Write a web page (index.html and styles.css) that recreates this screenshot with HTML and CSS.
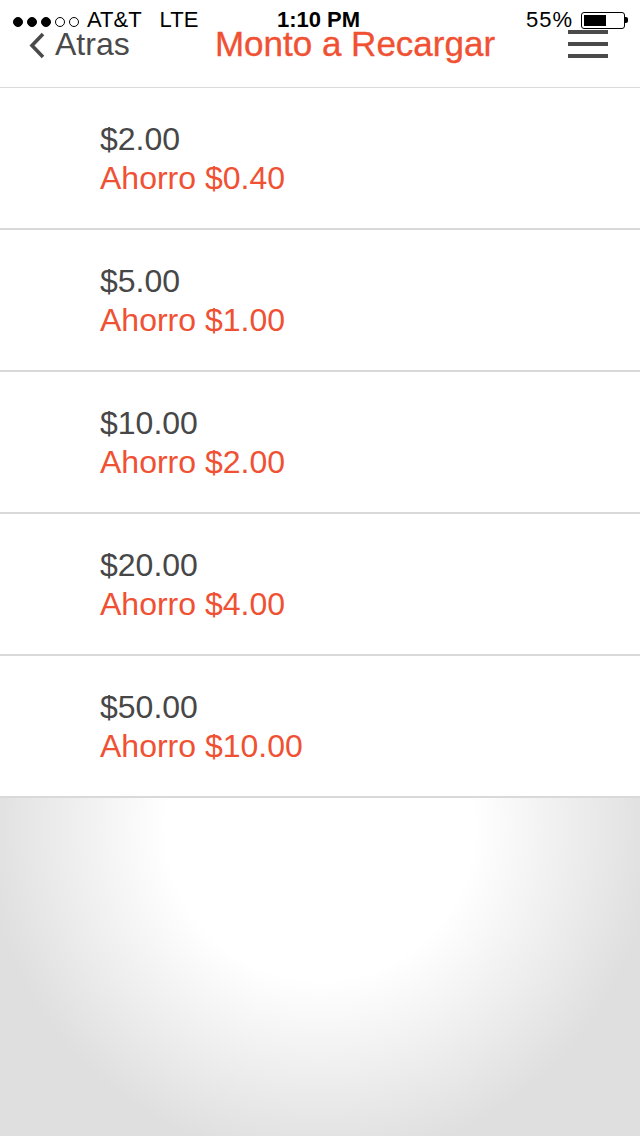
FILE: index.html
```html
<!DOCTYPE html>
<html lang="es">
<head>
<meta charset="utf-8">
<title>Monto a Recargar</title>
<link rel="stylesheet" href="styles.css">
</head>
<body>
<div class="screen">
  <header class="header">
    <div class="status">
      <div class="status-left">
        <span class="signal"><i class="dot on"></i><i class="dot on"></i><i class="dot on"></i><i class="dot"></i><i class="dot"></i></span>
        <span class="carrier">AT&amp;T</span>
        <span class="net">LTE</span>
      </div>
      <div class="status-time">1:10 PM</div>
      <div class="status-right">
        <span class="pct">55%</span>
        <span class="battery"><span class="battery-fill"></span></span>
        <span class="battery-nub"></span>
      </div>
    </div>
    <nav class="nav">
      <div class="back">
        <svg class="chev" width="18" height="27" viewBox="0 0 18 27"><polyline points="15,2 4,13.5 15,25" fill="none" stroke="#4a4a4a" stroke-width="3.6" stroke-linecap="butt" stroke-linejoin="miter"/></svg>
        <span class="back-label">Atras</span>
      </div>
      <h1 class="title">Monto a Recargar</h1>
      <div class="menu"><span></span><span></span><span></span></div>
    </nav>
  </header>
  <ul class="list">
    <li class="row"><div class="amount">$2.00</div><div class="saving">Ahorro $0.40</div></li>
    <li class="row"><div class="amount">$5.00</div><div class="saving">Ahorro $1.00</div></li>
    <li class="row"><div class="amount">$10.00</div><div class="saving">Ahorro $2.00</div></li>
    <li class="row"><div class="amount">$20.00</div><div class="saving">Ahorro $4.00</div></li>
    <li class="row"><div class="amount">$50.00</div><div class="saving">Ahorro $10.00</div></li>
  </ul>
  <div class="filler"></div>
</div>
</body>
</html>
```

FILE: styles.css
```css
* { box-sizing: border-box; }
html, body { margin: 0; padding: 0; }
body {
  font-family: "Liberation Sans", Arial, sans-serif;
  background: #fff;
  color: #000;
}
.screen {
  width: 640px;
  min-height: 1136px;
  display: flex;
  flex-direction: column;
}
.header {
  height: 88px;
  border-bottom: 1px solid #dadada;
  background: #fff;
}
.status {
  height: 28px;
  padding: 12px 12px 0 13px;
  display: grid;
  grid-template-columns: 1fr auto 1fr;
  font-size: 22px;
  line-height: 16px;
}
.status-left { display: flex; align-items: baseline; justify-self: start; }
.signal { display: flex; gap: 4px; align-self: center; margin-top: 2px; }
.dot {
  width: 10px; height: 10px; border-radius: 50%;
  border: 1px solid #000; display: block;
}
.dot.on { background: #000; }
.carrier { margin-left: 8px; }
.net { margin-left: 18px; }
.status-time { font-weight: bold; margin-right: 4px; }
.status-right { display: flex; justify-self: end; align-items: flex-start; }
.pct { letter-spacing: 1px; margin-right: 8px; }
.battery {
  width: 44px; height: 17px; margin-top: 0;
  border: 1px solid #000; border-radius: 3px;
  padding: 2px; display: block;
}
.battery-fill { display: block; width: 22px; height: 100%; background: #000; }
.battery-nub { width: 3px; height: 6px; background: #000; margin-top: 5px; border-radius: 0 2px 2px 0; }
.nav {
  height: 59px;
  display: flex;
  align-items: flex-start;
}
.back {
  width: 150px;
  padding-left: 28px;
  display: flex;
  align-items: flex-start;
  color: #4a4a4a;
  font-size: 32px;
  line-height: 32px;
}
.chev { margin-top: 4px; }
.back-label { margin-left: 9px; }
.title {
  flex: 1;
  margin: 0;
  text-align: center;
  font-size: 35px;
  line-height: 32px;
  font-weight: normal;
  color: #f05133;
  -webkit-text-stroke: 0.35px #f05133;
}
.menu {
  width: 80px;
  padding: 2px 0 0 8px;
  display: flex;
  flex-direction: column;
  gap: 8px;
}
.menu span { display: block; width: 40px; height: 4px; background: #4a4a4a; }
.list { list-style: none; margin: 0; padding: 0; }
.row {
  height: 142px;
  padding: 32px 0 0 100px;
  border-bottom: 2px solid #d9d9d9;
  font-size: 32px;
  line-height: 39px;
}
.amount { color: #474747; }
.saving { color: #f05133; }
.filler {
  flex: 1;
  background: radial-gradient(circle 335px at 320px 28px, #ffffff 46%, #dfdfdf 100%);
}
```
